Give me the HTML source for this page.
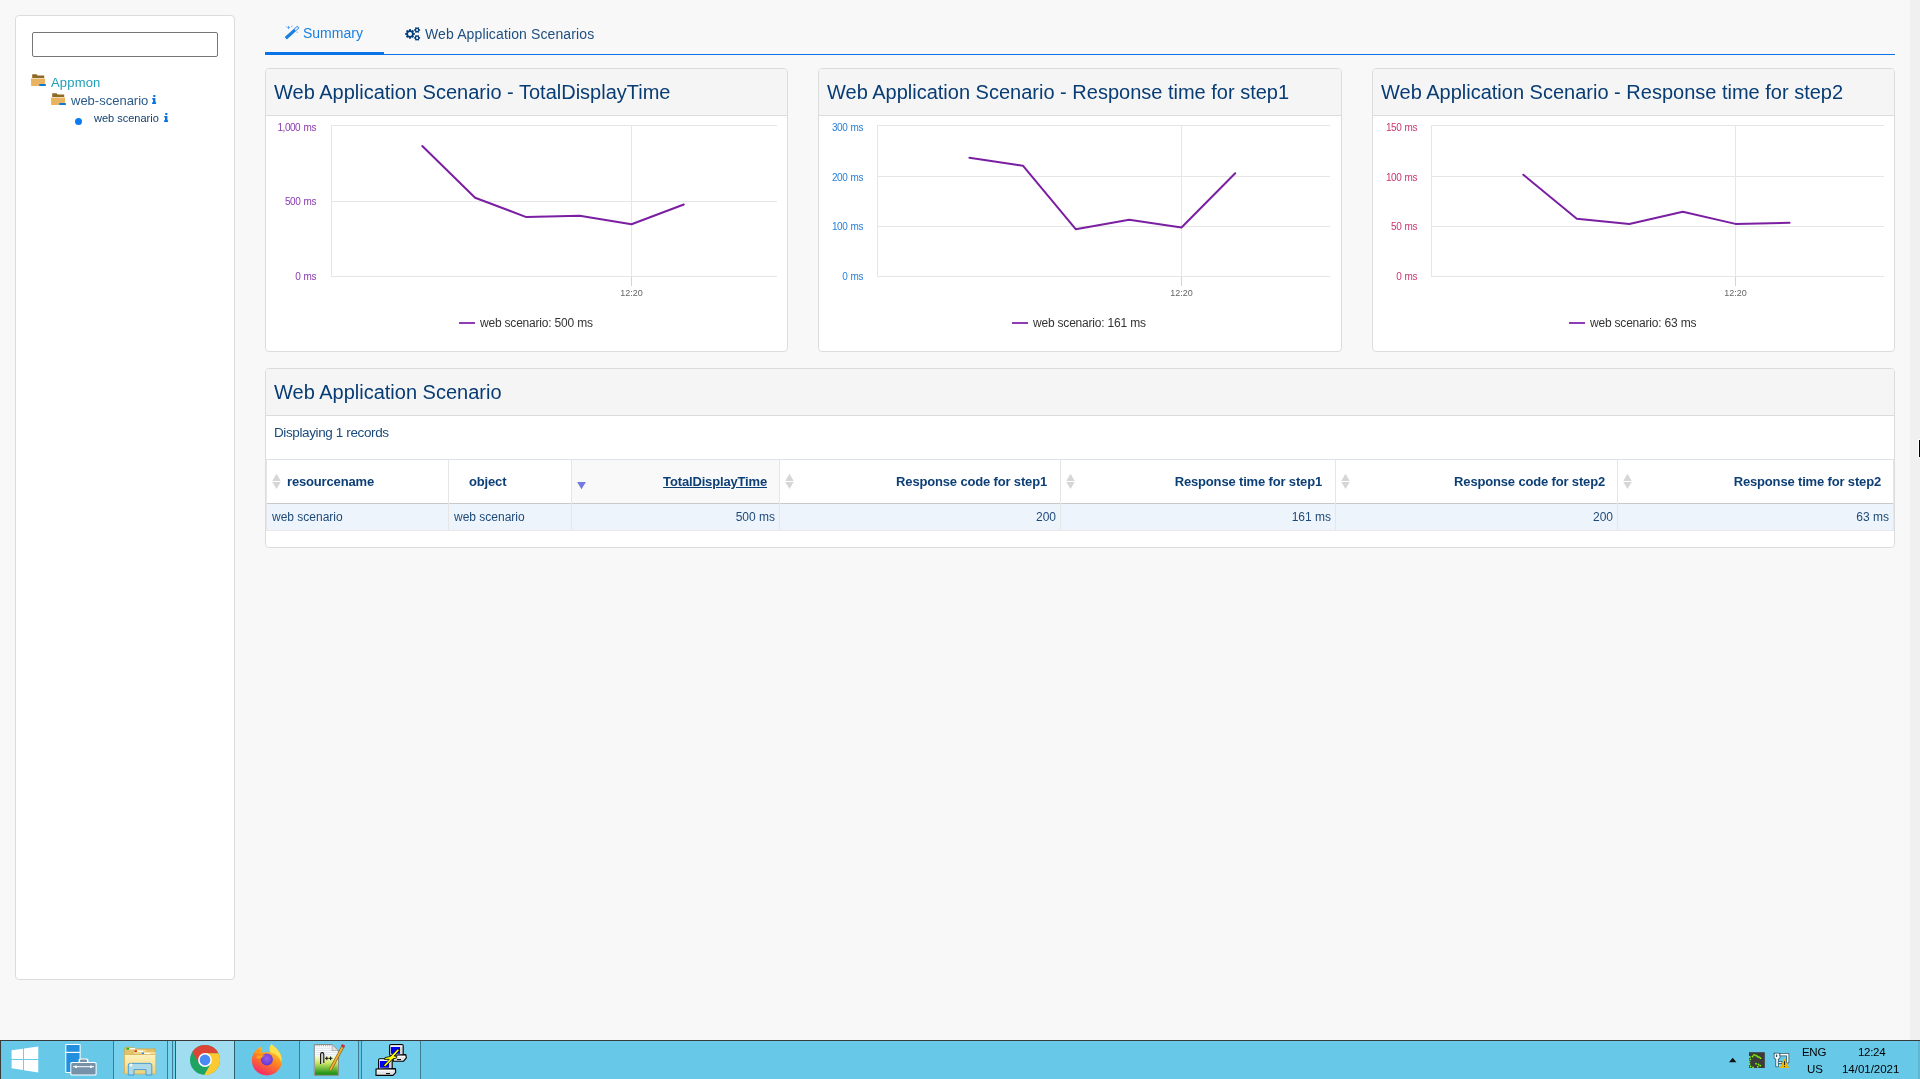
<!DOCTYPE html><html><head><meta charset="utf-8"><style>
*{box-sizing:border-box;margin:0;padding:0}
html,body{width:1920px;height:1079px;overflow:hidden;background:#f8f8f8;font-family:"Liberation Sans",sans-serif;position:relative}
.abs{position:absolute}
.t{position:absolute;white-space:nowrap;line-height:1;will-change:transform}
.panel{position:absolute;background:#fff;border:1px solid #dcdcdc;border-radius:4px;overflow:hidden}
.ph{position:absolute;left:0;top:0;right:0;height:47px;background:#f5f5f5;border-bottom:1px solid #dcdcdc}
svg{position:absolute;overflow:visible}
</style></head><body>
<div class="abs" style="left:1910px;top:0;width:10px;height:1040px;background:#f0f0f0"></div>
<div class="abs" style="left:15px;top:15px;width:220px;height:965px;background:#fff;border:1px solid #dcdcdc;border-radius:4px"></div>
<div class="abs" style="left:32px;top:32px;width:186px;height:25px;border:1px solid #767676;border-radius:2px;background:#fff"></div>
<svg style="left:31px;top:74px" width="16" height="13" viewBox="0 0 16 13">
<path d="M1.2 0.2 H5.6 L6.6 1.6 H13.2 V3.9 H1.2 Z" fill="#8e6a27"/>
<path d="M-0.1 4.5 H14.1 L13.8 12 H0.2 Z" fill="#e8b462"/>
<rect x="8.3" y="10" width="6.6" height="2.1" rx="0.5" fill="#0b78d2"/>
</svg>
<div class="t" style="left:51px;top:75.60px;font-size:13px;color:#1c9fb8;font-weight:normal;letter-spacing:0.18px">Appmon</div>
<svg style="left:51px;top:93px" width="16" height="13" viewBox="0 0 16 13">
<path d="M1.2 0.2 H5.6 L6.6 1.6 H13.2 V3.9 H1.2 Z" fill="#8e6a27"/>
<path d="M-0.1 4.5 H14.1 L13.8 12 H0.2 Z" fill="#e8b462"/>
<rect x="8.3" y="10" width="6.6" height="2.1" rx="0.5" fill="#0b78d2"/>
</svg>
<div class="t" style="left:71px;top:93.80px;font-size:13px;color:#2a5a8a;font-weight:normal;">web-scenario</div>
<svg style="left:151.8px;top:95px" width="5" height="9" viewBox="0 0 5 9">
<rect x="1.0" y="0.1" width="2.6" height="1.8" rx="0.8" fill="#0a74e0"/>
<path d="M0.2 3 H3.4 V7.3 H4.1 V9 H0.1 V7.3 H1.0 V4.6 H0.2 Z" fill="#0a74e0"/>
</svg>
<div class="abs" style="left:75px;top:117.5px;width:7px;height:7px;border-radius:50%;background:#0b7bf0"></div>
<div class="t" style="left:94px;top:113.39px;font-size:11px;color:#123f70;font-weight:normal;">web scenario</div>
<svg style="left:163.9px;top:113px" width="5" height="9" viewBox="0 0 5 9">
<rect x="1.0" y="0.1" width="2.6" height="1.8" rx="0.8" fill="#0a74e0"/>
<path d="M0.2 3 H3.4 V7.3 H4.1 V9 H0.1 V7.3 H1.0 V4.6 H0.2 Z" fill="#0a74e0"/>
</svg>
<div class="abs" style="left:265px;top:54px;width:1630px;height:1px;background:#0a73e6"></div>
<div class="abs" style="left:265px;top:52px;width:119px;height:3px;background:#0a73e6"></div>
<svg style="left:280px;top:20px" width="24" height="24" viewBox="280 20 24 24">
<g transform="rotate(-42 292 32.5)">
<rect x="283.5" y="31" width="17" height="3.2" rx="0.4" fill="#1a7fe0"/>
<rect x="296" y="31.6" width="3.8" height="2" fill="#cfe3fa"/>
</g>
<path d="M288.6 25.6 l0.55 1.35 1.35 0.55 -1.35 0.55 -0.55 1.35 -0.55 -1.35 -1.35 -0.55 1.35 -0.55z" fill="#3d8fe6"/>
<circle cx="291.8" cy="26.3" r="0.7" fill="#7fb4ef"/>
<circle cx="286.4" cy="26.6" r="0.6" fill="#9cc5f3"/>
<circle cx="297.2" cy="32.2" r="0.7" fill="#7fb4ef"/>
</svg>
<div class="t" style="left:303px;top:26.05px;font-size:14px;color:#1a7fe0;font-weight:normal;">Summary</div>
<svg style="left:400px;top:22px" width="26" height="22" viewBox="400 22 26 22"><g fill="#073f7c"><circle cx="410" cy="33.9" r="3.7"/><rect x="409.05" y="29.10" width="1.9" height="4.80" transform="rotate(0.0 410 33.9)"/><rect x="409.05" y="29.10" width="1.9" height="4.80" transform="rotate(45.0 410 33.9)"/><rect x="409.05" y="29.10" width="1.9" height="4.80" transform="rotate(90.0 410 33.9)"/><rect x="409.05" y="29.10" width="1.9" height="4.80" transform="rotate(135.0 410 33.9)"/><rect x="409.05" y="29.10" width="1.9" height="4.80" transform="rotate(180.0 410 33.9)"/><rect x="409.05" y="29.10" width="1.9" height="4.80" transform="rotate(225.0 410 33.9)"/><rect x="409.05" y="29.10" width="1.9" height="4.80" transform="rotate(270.0 410 33.9)"/><rect x="409.05" y="29.10" width="1.9" height="4.80" transform="rotate(315.0 410 33.9)"/><circle cx="417.1" cy="30.0" r="2.3"/><rect x="416.35" y="27.00" width="1.5" height="3.00" transform="rotate(30.0 417.1 30.0)"/><rect x="416.35" y="27.00" width="1.5" height="3.00" transform="rotate(90.0 417.1 30.0)"/><rect x="416.35" y="27.00" width="1.5" height="3.00" transform="rotate(150.0 417.1 30.0)"/><rect x="416.35" y="27.00" width="1.5" height="3.00" transform="rotate(210.0 417.1 30.0)"/><rect x="416.35" y="27.00" width="1.5" height="3.00" transform="rotate(270.0 417.1 30.0)"/><rect x="416.35" y="27.00" width="1.5" height="3.00" transform="rotate(330.0 417.1 30.0)"/><circle cx="417.1" cy="37.9" r="2.3"/><rect x="416.35" y="34.90" width="1.5" height="3.00" transform="rotate(30.0 417.1 37.9)"/><rect x="416.35" y="34.90" width="1.5" height="3.00" transform="rotate(90.0 417.1 37.9)"/><rect x="416.35" y="34.90" width="1.5" height="3.00" transform="rotate(150.0 417.1 37.9)"/><rect x="416.35" y="34.90" width="1.5" height="3.00" transform="rotate(210.0 417.1 37.9)"/><rect x="416.35" y="34.90" width="1.5" height="3.00" transform="rotate(270.0 417.1 37.9)"/><rect x="416.35" y="34.90" width="1.5" height="3.00" transform="rotate(330.0 417.1 37.9)"/></g><g fill="#f8f8f8"><circle cx="410" cy="33.9" r="2.0"/><circle cx="417.1" cy="30.0" r="1.05"/><circle cx="417.1" cy="37.9" r="1.05"/></g></svg>
<div class="t" style="left:425px;top:27.25px;font-size:14px;color:#1e4f80;font-weight:normal;letter-spacing:0.12px">Web Application Scenarios</div>
<div class="panel" style="left:265px;top:68px;width:523px;height:284px"><div class="ph"></div></div>
<div class="t" style="left:274px;top:81.57px;font-size:20px;color:#083c74;font-weight:normal;">Web Application Scenario - TotalDisplayTime</div>
<svg style="left:0;top:0" width="1920" height="400"><line x1="331" y1="125.5" x2="777" y2="125.5" stroke="#e6e6e6" stroke-width="1"/><line x1="331" y1="201.5" x2="777" y2="201.5" stroke="#e6e6e6" stroke-width="1"/><line x1="331" y1="276.5" x2="777" y2="276.5" stroke="#e6e6e6" stroke-width="1"/><line x1="331.5" y1="125" x2="331.5" y2="277" stroke="#e6e6e6" stroke-width="1"/><line x1="631.5" y1="125" x2="631.5" y2="276" stroke="#e6e6e6" stroke-width="1"/><line x1="631.5" y1="277" x2="631.5" y2="286" stroke="#ccd6eb" stroke-width="1"/><path d="M422.3 146.0 L475.1 197.7 L526.3 217.1 L579.7 215.7 L631.5 224.2 L683.8 204.5" fill="none" stroke="#7b1fa2" stroke-width="2" stroke-linejoin="round" stroke-linecap="round"/><rect x="459" y="322" width="16" height="2" fill="#8e3bb8"/></svg>
<div class="t" style="left:116.10px;width:200px;text-align:right;top:122.63px;font-size:10px;color:#8a3bb0;font-weight:normal;letter-spacing:-0.45px;word-spacing:1px">1,000 ms</div>
<div class="t" style="left:116.10px;width:200px;text-align:right;top:197.44px;font-size:10px;color:#8a3bb0;font-weight:normal;letter-spacing:-0.45px;word-spacing:1px">500 ms</div>
<div class="t" style="left:116.10px;width:200px;text-align:right;top:272.44px;font-size:10px;color:#8a3bb0;font-weight:normal;letter-spacing:-0.45px;word-spacing:1px">0 ms</div>
<div class="t" style="left:601px;width:61px;text-align:center;top:288.88px;font-size:9px;color:#666">12:20</div>
<div class="t" style="left:480px;top:316.54px;font-size:12px;color:#333;font-weight:normal;letter-spacing:-0.2px">web scenario: 500 ms</div>
<div class="panel" style="left:818px;top:68px;width:524px;height:284px"><div class="ph"></div></div>
<div class="t" style="left:827px;top:81.57px;font-size:20px;color:#083c74;font-weight:normal;">Web Application Scenario - Response time for step1</div>
<svg style="left:0;top:0" width="1920" height="400"><line x1="877" y1="125.5" x2="1330" y2="125.5" stroke="#e6e6e6" stroke-width="1"/><line x1="877" y1="176.5" x2="1330" y2="176.5" stroke="#e6e6e6" stroke-width="1"/><line x1="877" y1="226.5" x2="1330" y2="226.5" stroke="#e6e6e6" stroke-width="1"/><line x1="877" y1="276.5" x2="1330" y2="276.5" stroke="#e6e6e6" stroke-width="1"/><line x1="877.5" y1="125" x2="877.5" y2="277" stroke="#e6e6e6" stroke-width="1"/><line x1="1181.5" y1="125" x2="1181.5" y2="276" stroke="#e6e6e6" stroke-width="1"/><line x1="1181.5" y1="277" x2="1181.5" y2="286" stroke="#ccd6eb" stroke-width="1"/><path d="M969.4 157.8 L1022.9 165.7 L1075.7 229.2 L1129.2 219.7 L1181.5 227.5 L1235.2 173.3" fill="none" stroke="#7b1fa2" stroke-width="2" stroke-linejoin="round" stroke-linecap="round"/><rect x="1012" y="322" width="16" height="2" fill="#8e3bb8"/></svg>
<div class="t" style="left:662.50px;width:200px;text-align:right;top:122.63px;font-size:10px;color:#2a80d8;font-weight:normal;letter-spacing:-0.45px;word-spacing:1px">300 ms</div>
<div class="t" style="left:662.50px;width:200px;text-align:right;top:172.94px;font-size:10px;color:#2a80d8;font-weight:normal;letter-spacing:-0.45px;word-spacing:1px">200 ms</div>
<div class="t" style="left:662.50px;width:200px;text-align:right;top:222.44px;font-size:10px;color:#2a80d8;font-weight:normal;letter-spacing:-0.45px;word-spacing:1px">100 ms</div>
<div class="t" style="left:662.50px;width:200px;text-align:right;top:272.44px;font-size:10px;color:#2a80d8;font-weight:normal;letter-spacing:-0.45px;word-spacing:1px">0 ms</div>
<div class="t" style="left:1151px;width:61px;text-align:center;top:288.88px;font-size:9px;color:#666">12:20</div>
<div class="t" style="left:1033px;top:316.54px;font-size:12px;color:#333;font-weight:normal;letter-spacing:-0.2px">web scenario: 161 ms</div>
<div class="panel" style="left:1372px;top:68px;width:523px;height:284px"><div class="ph"></div></div>
<div class="t" style="left:1381px;top:81.57px;font-size:20px;color:#083c74;font-weight:normal;">Web Application Scenario - Response time for step2</div>
<svg style="left:0;top:0" width="1920" height="400"><line x1="1431" y1="125.5" x2="1884" y2="125.5" stroke="#e6e6e6" stroke-width="1"/><line x1="1431" y1="176.5" x2="1884" y2="176.5" stroke="#e6e6e6" stroke-width="1"/><line x1="1431" y1="226.5" x2="1884" y2="226.5" stroke="#e6e6e6" stroke-width="1"/><line x1="1431" y1="276.5" x2="1884" y2="276.5" stroke="#e6e6e6" stroke-width="1"/><line x1="1431.5" y1="125" x2="1431.5" y2="277" stroke="#e6e6e6" stroke-width="1"/><line x1="1735.5" y1="125" x2="1735.5" y2="276" stroke="#e6e6e6" stroke-width="1"/><line x1="1735.5" y1="277" x2="1735.5" y2="286" stroke="#ccd6eb" stroke-width="1"/><path d="M1523.3 174.7 L1576.8 218.8 L1629.3 223.9 L1682.8 211.8 L1735.4 223.9 L1789.6 222.8" fill="none" stroke="#7b1fa2" stroke-width="2" stroke-linejoin="round" stroke-linecap="round"/><rect x="1569" y="322" width="16" height="2" fill="#8e3bb8"/></svg>
<div class="t" style="left:1216.50px;width:200px;text-align:right;top:122.63px;font-size:10px;color:#c93570;font-weight:normal;letter-spacing:-0.45px;word-spacing:1px">150 ms</div>
<div class="t" style="left:1216.50px;width:200px;text-align:right;top:172.94px;font-size:10px;color:#c93570;font-weight:normal;letter-spacing:-0.45px;word-spacing:1px">100 ms</div>
<div class="t" style="left:1216.50px;width:200px;text-align:right;top:222.44px;font-size:10px;color:#c93570;font-weight:normal;letter-spacing:-0.45px;word-spacing:1px">50 ms</div>
<div class="t" style="left:1216.50px;width:200px;text-align:right;top:272.44px;font-size:10px;color:#c93570;font-weight:normal;letter-spacing:-0.45px;word-spacing:1px">0 ms</div>
<div class="t" style="left:1705px;width:61px;text-align:center;top:288.88px;font-size:9px;color:#666">12:20</div>
<div class="t" style="left:1590px;top:316.54px;font-size:12px;color:#333;font-weight:normal;letter-spacing:-0.2px">web scenario: 63 ms</div>
<div class="panel" style="left:265px;top:368px;width:1630px;height:180px"><div class="ph"></div></div>
<div class="t" style="left:274px;top:381.97px;font-size:20px;color:#083c74;font-weight:normal;">Web Application Scenario</div>
<div class="t" style="left:273.5px;top:426.47px;font-size:13.5px;color:#1a4a7c;font-weight:normal;letter-spacing:-0.38px">Displaying 1 records</div>
<div class="abs" style="left:266px;top:459px;width:1628px;height:1px;background:#dde2e8"></div>
<div class="abs" style="left:266px;top:503px;width:1628px;height:1px;background:#c9c9c9"></div>
<div class="abs" style="left:266px;top:504px;width:1628px;height:26px;background:#edf4fc"></div>
<div class="abs" style="left:266px;top:530px;width:1628px;height:1px;background:#e8e8e8"></div>
<div class="abs" style="left:572px;top:460px;width:207px;height:43px;background:#f9f9f9"></div>
<div class="abs" style="left:266px;top:460px;width:1px;height:70px;background:#e6e6e6"></div>
<div class="abs" style="left:448px;top:460px;width:1px;height:70px;background:#e6e6e6"></div>
<div class="abs" style="left:571px;top:460px;width:1px;height:70px;background:#e6e6e6"></div>
<div class="abs" style="left:779px;top:460px;width:1px;height:70px;background:#e6e6e6"></div>
<div class="abs" style="left:1060px;top:460px;width:1px;height:70px;background:#e6e6e6"></div>
<div class="abs" style="left:1335px;top:460px;width:1px;height:70px;background:#e6e6e6"></div>
<div class="abs" style="left:1617px;top:460px;width:1px;height:70px;background:#e6e6e6"></div>
<div class="abs" style="left:1893px;top:460px;width:1px;height:70px;background:#e6e6e6"></div>
<svg style="left:272px;top:474px" width="9" height="15" viewBox="0 0 9 15">
<path d="M4.5 -0.3 L8.7 6.9 H0.3 Z M0.3 8 H8.7 L4.5 15.1 Z" fill="#d6d6d6"/></svg>
<svg style="left:785px;top:474px" width="9" height="15" viewBox="0 0 9 15">
<path d="M4.5 -0.3 L8.7 6.9 H0.3 Z M0.3 8 H8.7 L4.5 15.1 Z" fill="#d6d6d6"/></svg>
<svg style="left:1066px;top:474px" width="9" height="15" viewBox="0 0 9 15">
<path d="M4.5 -0.3 L8.7 6.9 H0.3 Z M0.3 8 H8.7 L4.5 15.1 Z" fill="#d6d6d6"/></svg>
<svg style="left:1341px;top:474px" width="9" height="15" viewBox="0 0 9 15">
<path d="M4.5 -0.3 L8.7 6.9 H0.3 Z M0.3 8 H8.7 L4.5 15.1 Z" fill="#d6d6d6"/></svg>
<svg style="left:1623px;top:474px" width="9" height="15" viewBox="0 0 9 15">
<path d="M4.5 -0.3 L8.7 6.9 H0.3 Z M0.3 8 H8.7 L4.5 15.1 Z" fill="#d6d6d6"/></svg>
<svg style="left:577px;top:482px" width="9" height="8" viewBox="0 0 9 8"><path d="M0.1 0 H8.9 L4.5 7.3 Z" fill="#747ade"/></svg>
<div class="t" style="left:287.4px;top:475.00px;font-size:13px;color:#0d3f77;font-weight:bold;letter-spacing:-0.16px">resourcename</div>
<div class="t" style="left:469.4px;top:475.00px;font-size:13px;color:#0d3f77;font-weight:bold;letter-spacing:-0.16px">object</div>
<div class="t" style="left:566.80px;width:200px;text-align:right;top:475.00px;font-size:13px;color:#0d3f77;font-weight:bold;letter-spacing:-0.16px;text-decoration:underline">TotalDisplayTime</div>
<div class="t" style="left:847.30px;width:200px;text-align:right;top:475.00px;font-size:13px;color:#0d3f77;font-weight:bold;letter-spacing:-0.16px">Response code for step1</div>
<div class="t" style="left:1122.20px;width:200px;text-align:right;top:475.00px;font-size:13px;color:#0d3f77;font-weight:bold;letter-spacing:-0.16px">Response time for step1</div>
<div class="t" style="left:1405.00px;width:200px;text-align:right;top:475.00px;font-size:13px;color:#0d3f77;font-weight:bold;letter-spacing:-0.16px">Response code for step2</div>
<div class="t" style="left:1680.80px;width:200px;text-align:right;top:475.00px;font-size:13px;color:#0d3f77;font-weight:bold;letter-spacing:-0.16px">Response time for step2</div>
<div class="t" style="left:272px;top:511.14px;font-size:12px;color:#1f4a78;font-weight:normal;">web scenario</div>
<div class="t" style="left:454px;top:511.14px;font-size:12px;color:#1f4a78;font-weight:normal;">web scenario</div>
<div class="t" style="left:575.30px;width:200px;text-align:right;top:511.14px;font-size:12px;color:#1f4a78;font-weight:normal;">500 ms</div>
<div class="t" style="left:856.00px;width:200px;text-align:right;top:511.14px;font-size:12px;color:#1f4a78;font-weight:normal;">200</div>
<div class="t" style="left:1131.00px;width:200px;text-align:right;top:511.14px;font-size:12px;color:#1f4a78;font-weight:normal;">161 ms</div>
<div class="t" style="left:1412.60px;width:200px;text-align:right;top:511.14px;font-size:12px;color:#1f4a78;font-weight:normal;">200</div>
<div class="t" style="left:1688.50px;width:200px;text-align:right;top:511.14px;font-size:12px;color:#1f4a78;font-weight:normal;">63 ms</div>
<div class="abs" style="left:1918px;top:439px;width:2px;height:19px;background:#fff"></div>
<div class="abs" style="left:1919px;top:440px;width:1px;height:17px;background:#000"></div>
<div class="abs" style="left:0;top:1040px;width:1920px;height:39px;background:#67c8e8;border-top:1px solid #3a3a3a"></div>
<div class="abs" style="left:0;top:1040px;width:1px;height:39px;background:#3a3a3a"></div>
<div class="abs" style="left:114px;top:1041px;width:53px;height:38px;background:#77d0ec"></div>
<div class="abs" style="left:168px;top:1041px;width:4px;height:38px;background:#7dd3ef"></div>
<div class="abs" style="left:173px;top:1041px;width:2px;height:38px;background:#6dd2f4"></div>
<div class="abs" style="left:176px;top:1041px;width:58px;height:38px;background:#a0ddf1"></div>
<div class="abs" style="left:300px;top:1041px;width:58px;height:38px;background:#74cfec"></div>
<div class="abs" style="left:362px;top:1041px;width:58px;height:38px;background:#74cfec"></div>
<div class="abs" style="left:113px;top:1041px;width:1px;height:38px;background:#3d7d8e"></div>
<div class="abs" style="left:167px;top:1041px;width:1px;height:38px;background:#3d7d8e"></div>
<div class="abs" style="left:172px;top:1041px;width:1px;height:38px;background:#3d7d8e"></div>
<div class="abs" style="left:175px;top:1041px;width:1px;height:38px;background:#2d5f6d"></div>
<div class="abs" style="left:234px;top:1041px;width:1px;height:38px;background:#2d5f6d"></div>
<div class="abs" style="left:299px;top:1041px;width:1px;height:38px;background:#3d7d8e"></div>
<div class="abs" style="left:358px;top:1041px;width:1px;height:38px;background:#3d7d8e"></div>
<div class="abs" style="left:361px;top:1041px;width:1px;height:38px;background:#3d7d8e"></div>
<div class="abs" style="left:420px;top:1041px;width:1px;height:38px;background:#3d7d8e"></div>
<div class="abs" style="left:1918px;top:1041px;width:2px;height:38px;background:#5fb7d4"></div>

<svg style="left:0;top:1030px" width="1920" height="49" viewBox="0 1030 1920 49">
<!-- windows logo -->
<g fill="#fff">
<polygon points="11.6,1050.3 23,1048.75 23,1058.9 11.6,1058.9"/>
<polygon points="23.9,1048.4 38.25,1046.6 38.25,1058.9 23.9,1058.9"/>
<polygon points="11.6,1060 23,1060 23,1069.9 11.6,1068.25"/>
<polygon points="23.9,1060 38.25,1060 38.25,1072.5 23.9,1070.3"/>
</g>
<!-- server manager -->
<rect x="65.3" y="1044" width="15.3" height="29" rx="1" fill="#fff"/>
<rect x="66.3" y="1045" width="13.3" height="6.8" fill="#2290de"/>
<rect x="66.3" y="1053" width="13.3" height="19" fill="#2290de"/>
<rect x="78.6" y="1058.5" width="9.8" height="4.5" rx="1.5" fill="#fff"/>
<rect x="80" y="1059.5" width="7" height="3" rx="1" fill="#7692a8"/>
<rect x="70.3" y="1061.9" width="26.3" height="13.7" rx="1.6" fill="#fff"/>
<rect x="71.3" y="1063" width="24.3" height="11.6" rx="1" fill="#7692a8"/>
<rect x="73" y="1066.2" width="21" height="1" fill="#fff"/>
<circle cx="76" cy="1066.7" r="1.2" fill="#fff"/><circle cx="91" cy="1066.7" r="1.2" fill="#fff"/>
<!-- explorer -->
<defs><linearGradient id="exg" x1="0" y1="0" x2="0" y2="1"><stop offset="0" stop-color="#fdf3c0"/><stop offset="1" stop-color="#eed27a"/></linearGradient></defs>
<path d="M124.5 1049 Q124.5 1047.2 126.3 1047.2 H133.5 L135 1048.8 H155 V1073.5 H124.5 Z" fill="#e3c26a" stroke="#c9a24a" stroke-width="0.6"/>
<rect x="126.5" y="1047.8" width="2.6" height="1.8" fill="#12b712"/>
<rect x="129.2" y="1048.1" width="6" height="1.3" fill="#fff"/>
<rect x="134" y="1049.7" width="12" height="4" rx="0.8" fill="#efd88a"/>
<rect x="134.5" y="1050.3" width="2.4" height="1.7" fill="#d42a1a"/>
<rect x="137" y="1050.6" width="6" height="1.3" fill="#fff"/>
<rect x="141" y="1052" width="14.5" height="4" rx="0.8" fill="#f3de92"/>
<rect x="141.7" y="1052.6" width="2.4" height="1.7" fill="#1e8ae8"/>
<rect x="144.3" y="1052.9" width="6" height="1.3" fill="#fff"/>
<rect x="124.5" y="1054.5" width="31.3" height="19.5" rx="0.8" fill="url(#exg)" stroke="#d2ad55" stroke-width="0.7"/>
<path d="M128.3 1075 V1065.2 Q128.3 1063.4 130.1 1063.4 H150 Q151.8 1063.4 151.8 1065.2 V1075 H146 V1069.6 H134 V1075 Z" fill="#a6d8f2" fill-opacity="0.9" stroke="#3a98d6" stroke-width="0.9"/>
<circle cx="131" cy="1065" r="1.5" fill="#fff" opacity="0.8"/>
<!-- chrome -->
<circle cx="205" cy="1060" r="15" fill="#1ea362"/>
<path d="M205 1053.2 L218.37 1053.2 A15 15 0 0 0 192.42 1051.82 L199.11 1063.4 Z" fill="#db4437"/>
<path d="M210.89 1063.4 L204.2 1074.98 A15 15 0 0 0 218.37 1053.2 L205 1053.2 Z" fill="#fcc933"/>
<circle cx="205" cy="1060" r="6.9" fill="#fff"/>
<circle cx="205" cy="1060" r="5.4" fill="#4a8af4"/>
<!-- firefox -->
<defs>
<linearGradient id="ffg" x1="0.8" y1="0" x2="0.3" y2="1">
<stop offset="0" stop-color="#ffe14a"/><stop offset="0.45" stop-color="#ff8a1a"/><stop offset="1" stop-color="#f5236a"/>
</linearGradient>
<radialGradient id="ffp" cx="0.5" cy="0.4" r="0.6">
<stop offset="0" stop-color="#a05ae8"/><stop offset="1" stop-color="#5b3ad0"/>
</radialGradient>
<linearGradient id="npg" x1="0" y1="0" x2="0" y2="1">
<stop offset="0" stop-color="#f4fbe0"/><stop offset="0.35" stop-color="#cfe86a"/><stop offset="1" stop-color="#0e8a0e"/>
</linearGradient>
</defs>
<circle cx="266.9" cy="1060.5" r="15" fill="url(#ffg)"/>
<path d="M259 1045 Q263 1047 262 1052.5 Q266 1051.5 270 1052.5 Q268.5 1048 271.3 1044 Q266 1043 259 1045 Z" fill="#67c8e8"/>
<path d="M271.3 1044 Q283 1052 281.5 1063 Q279 1054 270.5 1052.8 Q268.5 1048 271.3 1044 Z" fill="#ffe04a"/>
<path d="M256.9 1049.3 L258.6 1052.8 L255 1053 Z" fill="#ff9b20"/>
<path d="M260.5 1050 L262.2 1053.5 L258.6 1053.5 Z" fill="#ffa620"/>
<circle cx="266.9" cy="1059.6" r="6" fill="url(#ffp)"/>
<path d="M255.8 1057.6 Q259 1054 265.5 1055.8 Q262.5 1056 261.2 1058.3 Q258 1059 255.8 1057.6 Z" fill="#ffa31f"/>
<!-- notepad++ -->
<path d="M314.3 1044.6 H332 L338.4 1050.6 V1075.4 H314.3 Z" fill="#fff" stroke="#7a7a7a" stroke-width="0.9"/>
<path d="M315 1056 H337.9 V1074.9 H315 Z" fill="url(#npg)"/>
<g stroke="#c9d6e3" stroke-width="0.7"><line x1="315.5" y1="1048.2" x2="331" y2="1048.2"/><line x1="315.5" y1="1050.4" x2="336" y2="1050.4"/><line x1="315.5" y1="1052.6" x2="337" y2="1052.6"/><line x1="315.5" y1="1054.8" x2="337" y2="1054.8"/></g>
<line x1="315.5" y1="1045.8" x2="331" y2="1045.8" stroke="#666" stroke-width="0.8" stroke-dasharray="0.8 1.1"/>
<path d="M332 1044.6 V1050.6 H338.4 Z" fill="#e2e2e2" stroke="#8a8a8a" stroke-width="0.6"/>
<path d="M320.6 1064 V1054.2 Q320.6 1052.6 322.2 1052.6 Q323.8 1052.6 323.8 1054.2 V1063" fill="#d8d8d8" stroke="#111" stroke-width="1.1"/>
<g stroke="#111" stroke-width="1"><line x1="325" y1="1058.3" x2="328.6" y2="1058.3"/><line x1="326.8" y1="1056.5" x2="326.8" y2="1060.1"/><line x1="328.8" y1="1058.3" x2="332.4" y2="1058.3"/><line x1="330.6" y1="1056.5" x2="330.6" y2="1060.1"/></g>
<path d="M343.4 1045.5 L330.3 1070" stroke="#6a5020" stroke-width="3" stroke-linecap="butt"/>
<path d="M343.4 1045.5 L330.3 1070" stroke="#f2b02a" stroke-width="2"/>
<path d="M342 1044 L345 1045.5 L344 1048 L341 1046.8 Z" fill="#c83040"/>
<!-- putty -->
<g stroke="#000" stroke-width="1.1" stroke-linejoin="round">
<rect x="389.6" y="1044.6" width="13.6" height="11.2" rx="1.2" fill="#d4d4d4"/>
<path d="M393.2 1055.2 L405.8 1054.6 L406.4 1057.8 L403.6 1061.2 L393.2 1061.2 Z" fill="#e4e4e4"/>
<rect x="378.6" y="1058.8" width="13.6" height="11.2" rx="1.2" fill="#d4d4d4"/>
<path d="M376 1069 L395.4 1068.6 L395.8 1072.4 L393 1075.4 L376 1075.4 Z" fill="#e4e4e4"/>
</g>
<rect x="390.4" y="1045.4" width="12" height="1.2" fill="#fff"/>
<rect x="379.4" y="1059.6" width="12" height="1.2" fill="#fff"/>
<rect x="391" y="1047" width="9" height="6.8" fill="#0000f0"/>
<rect x="380" y="1061" width="9" height="6.7" fill="#0000f0"/>
<rect x="377" y="1070" width="16" height="1.3" fill="#fff"/>
<rect x="394" y="1056" width="11" height="1.2" fill="#fff"/>
<rect x="386" y="1073" width="4" height="1.1" fill="#111"/>
<rect x="397" y="1059" width="4" height="1.1" fill="#111"/>
<polygon points="397.6,1048.9 399.6,1049.9 394.2,1056.1 397,1056.5 396.4,1058.2 393,1058.7 385.4,1066.5 383.2,1065.8 389.2,1059.3 384.6,1059.5 384.9,1057.7 390.6,1056.3" fill="#ffff00" stroke="#000" stroke-width="0.8" stroke-linejoin="round"/>
<!-- tray -->
<polygon points="1729,1062.3 1736.4,1062.3 1732.7,1057.7" fill="#111"/>
<rect x="1749" y="1052.2" width="15.8" height="15.8" fill="#3e3a3a"/>
<g fill="#7cff00">
<circle cx="1752.5" cy="1056.5" r="0.9"/><circle cx="1754" cy="1055" r="0.9"/><circle cx="1756" cy="1055.5" r="0.9"/><circle cx="1757.5" cy="1056.5" r="0.9"/><circle cx="1759" cy="1057.2" r="0.9"/><circle cx="1760.5" cy="1058.2" r="0.9"/>
<circle cx="1749.8" cy="1057" r="0.9"/><circle cx="1750.3" cy="1059.3" r="0.9"/><circle cx="1749.5" cy="1061.6" r="0.9"/><circle cx="1749.6" cy="1064" r="0.9"/><circle cx="1750.5" cy="1066.5" r="0.9"/><circle cx="1753" cy="1067.3" r="0.9"/>
<circle cx="1756" cy="1063.7" r="0.9"/><circle cx="1758.5" cy="1064.5" r="0.9"/><circle cx="1760.3" cy="1065.6" r="0.9"/><circle cx="1757.8" cy="1066.8" r="0.9"/>
</g>
<g>
<g stroke="#1d4e60" stroke-width="1.5" fill="#fff" stroke-linejoin="round" paint-order="stroke">
<path d="M1774.3 1053.4 h4.4 a0.9 0.9 0 0 1 0.9 0.9 v3.6 l-1.7 1.2 v7.3 h-1.7 v-7.3 l-1.7 -1.2 v-3.6 a0.9 0.9 0 0 1 0.9 -0.9 z"/>
<path d="M1780.3 1053.8 h8.2 v8.6 h-1.6 v-7 h-6.6 z"/>
<path d="M1778.6 1061.8 h3 v1.4 h-3 z"/>
</g>
<rect x="1775.9" y="1054.5" width="1.3" height="2.4" rx="0.5" fill="#1d4e60"/>
<circle cx="1779.6" cy="1065.5" r="0.6" fill="#fff"/>
<polygon points="1784.4,1058.6 1789,1068 1779.8,1068" fill="#f5b400"/>
<rect x="1784" y="1061.2" width="0.9" height="3.9" fill="#111"/><rect x="1784" y="1066" width="0.9" height="0.9" fill="#111"/>
</g>
</svg>
<div class="t" style="left:1802px;top:1046.5px;font-size:11.5px;color:#000;letter-spacing:-0.3px">ENG</div>
<div class="t" style="left:1807px;top:1063.5px;font-size:11.5px;color:#000">US</div>
<div class="t" style="left:1858.2px;top:1046.5px;font-size:11.5px;color:#000;letter-spacing:-0.3px">12:24</div>
<div class="t" style="left:1842.3px;top:1063.5px;font-size:11.5px;color:#000;letter-spacing:-0.03px">14/01/2021</div>

</body></html>
